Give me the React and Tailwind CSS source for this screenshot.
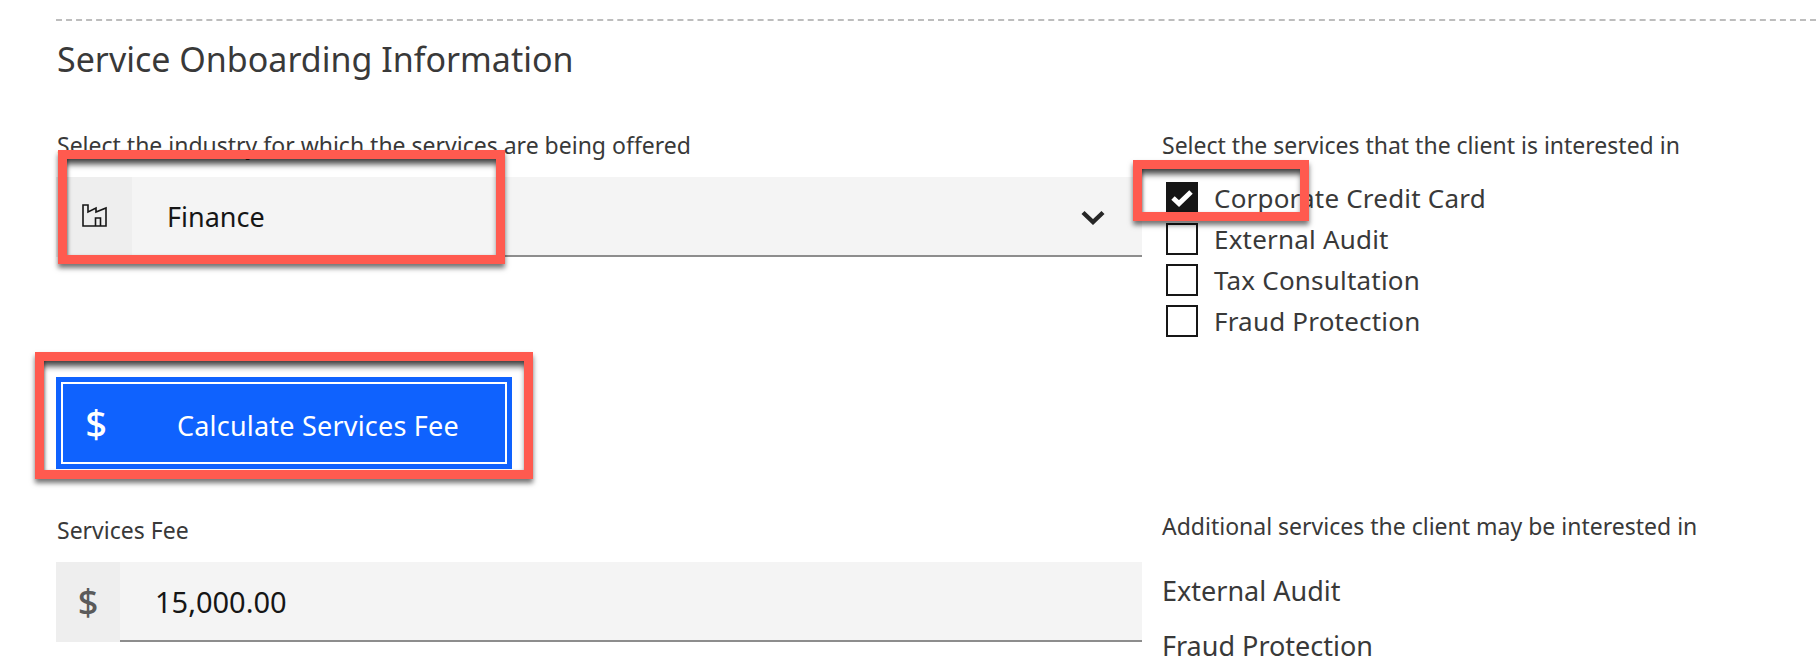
const services = [
  { name: 'Corporate Credit Card', checked: true },
  { name: 'External Audit' },
  { name: 'Tax Consultation' },
  { name: 'Fraud Protection' },
]

function FactoryIcon() {
  return (
    <svg width="25" height="23" viewBox="0 0 25 23" fill="none" stroke="#161616" strokeWidth="1.6">
      <path d="M1 1H6V8L14 4V8L24 4V22H1Z" />
      <path d="M13.5 22V14H18.5V22" />
    </svg>
  )
}

function Highlight({ className }) {
  return (
    <div
      className={`absolute z-10 border-[9px] border-[#ff5a4f] shadow-[0_4px_5px_rgba(0,0,0,0.55),inset_0_7px_6px_-2px_rgba(0,0,0,0.75),inset_2px_0_3px_-1px_rgba(0,0,0,0.3)] ${className}`}
    />
  )
}

export default function App() {
  return (
    <div className="relative w-[1816px] h-[670px] overflow-hidden bg-white pt-[19px] pl-[56px] font-['Noto_Sans',sans-serif] text-[#393939]">
      <div className="border-t-2 border-dashed border-[#bdbdbd]" />
      <h2 className="mt-[18px] pl-px h-[40px] text-[34px] leading-[40px]">Service Onboarding Information</h2>

      <div className="mt-[53px] flex gap-[20px]">
        <div className="w-[1086px]">
          <label className="block pl-px h-[26px] text-[23px] leading-[26px] whitespace-nowrap">
            Select the industry for which the services are being offered
          </label>
          <div className="mt-[19px] flex h-[80px] bg-[#f4f4f4] border-b-2 border-[#8d8d8d]">
            <div className="flex w-[76px] items-center justify-center bg-[#eeeeee] pb-[4px] -mb-[2px]">
              <FactoryIcon />
            </div>
            <div className="flex flex-1 items-center pl-[35px] pt-[3px] text-[27px] text-[#161616]">Finance</div>
            <div className="flex w-[98px] items-center justify-center pt-[2px]">
              <svg width="24" height="15" viewBox="0 0 24 15" fill="none" stroke="#262626" strokeWidth="4.4">
                <path d="M2 2.5L12 12L22 2.5" />
              </svg>
            </div>
          </div>
        </div>
        <div className="whitespace-nowrap">
          <div className="h-[26px] text-[23px] leading-[26px]">Select the services that the client is interested in</div>
          <div className="mt-[24px] flex flex-col gap-[10px] pl-[4px]">
            {services.map((s) => (
              <div key={s.name} className="flex h-[31px] items-center gap-[17px]">
                <span
                  className={`flex h-[32px] w-[32px] items-center justify-center border-2 border-[#161616] ${s.checked ? 'bg-[#161616]' : 'bg-white'}`}
                >
                  {s.checked && (
                    <svg width="22" height="18" viewBox="0 0 22 18" fill="none" stroke="white" strokeWidth="5">
                      <path d="M2 9L8 14.5L20 3" />
                    </svg>
                  )}
                </span>
                <span className="pt-[2px] -ml-px text-[26px] leading-[31px] tracking-[0.2px]">{s.name}</span>
              </div>
            ))}
          </div>
        </div>
      </div>

      <button className="mt-[41px] flex h-[92px] w-[456px] items-center bg-[#0f62fe] text-white outline-2 outline-white -outline-offset-[7px]">
        <span className="w-[80px] text-center text-[38px] font-medium">$</span>
        <span className="pl-[41px] pt-[6px] text-[27px] tracking-[0.2px]">Calculate Services Fee</span>
      </button>

      <div className="mt-[48px] flex gap-[20px]">
        <div className="w-[1086px]">
          <label className="block pl-px h-[26px] text-[23px] leading-[26px]">Services Fee</label>
          <div className="mt-[19px] flex h-[80px] bg-[#f4f4f4] border-b-2 border-[#8d8d8d]">
            <div className="flex w-[64px] items-center justify-center bg-[#eeeeee] -mb-[2px] text-[36px] font-medium text-[#5a5a5a]">$</div>
            <div className="flex flex-1 items-center pl-[35px] pt-[2px] text-[29px] text-[#161616]">15,000.00</div>
          </div>
        </div>
        <div className="-mt-[4px] whitespace-nowrap">
          <div className="h-[26px] text-[23px] leading-[26px]">Additional services the client may be interested in</div>
          <div className="mt-[36px] text-[27px] leading-[32px]">External Audit</div>
          <div className="mt-[23px] text-[27px] leading-[32px]">Fraud Protection</div>
        </div>
      </div>

      <Highlight className="left-[58px] top-[150px] h-[114px] w-[447px]" />
      <Highlight className="left-[1133px] top-[160px] h-[61px] w-[176px]" />
      <Highlight className="left-[35px] top-[352px] h-[127px] w-[498px]" />
    </div>
  )
}
